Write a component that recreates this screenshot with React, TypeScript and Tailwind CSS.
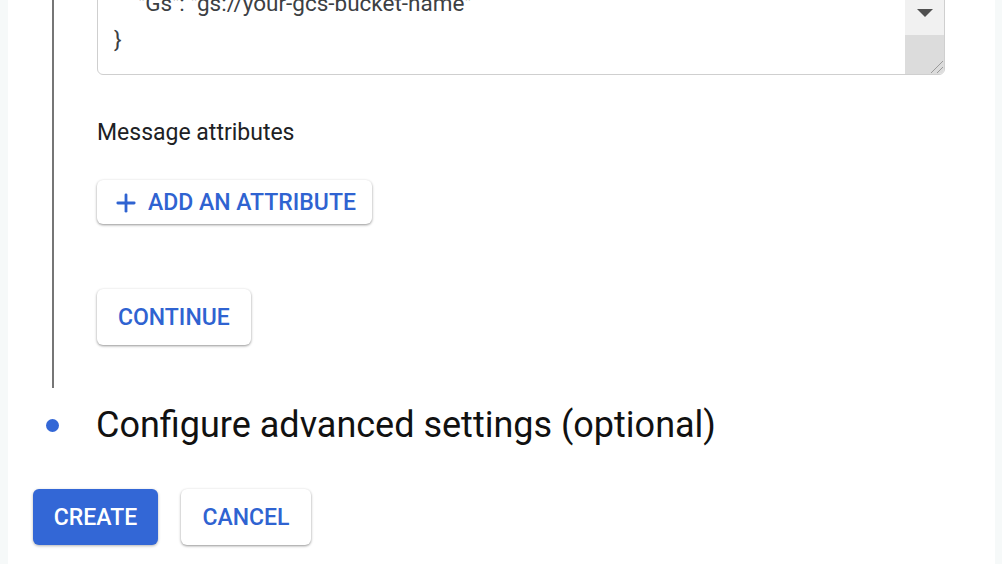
import { Plus } from 'lucide-react';

const font = { fontFamily: 'Roboto, "Liberation Sans", sans-serif' };

function RaisedButton({ children, className }: { children: React.ReactNode; className?: string }) {
  return (
    <button
      className={`flex items-center rounded-md bg-white pt-[2px] font-medium text-[#2f63d1] shadow-[0_1px_3px_rgba(0,0,0,0.3),0_1px_2px_rgba(0,0,0,0.15)] ${className ?? ''}`}
    >
      {children}
    </button>
  );
}

function CodeBox() {
  return (
    <div className="relative -mt-[26px] h-[101px] w-[848px] overflow-hidden rounded-md border border-[#cfcfcf] bg-white text-[22.5px] leading-[36px] text-[#3c4043]">
      <div className="pl-[16px] pt-[10px]">
        <div className="pl-[24px]">"Gs": "gs://your-gcs-bucket-name"</div>
        <div>{'}'}</div>
      </div>
      <div className="absolute right-0 top-0 flex h-full w-[39px] flex-col">
        <div className="flex h-[60px] items-end justify-center bg-[#f1f1f1] pb-[18px]">
          <div className="h-0 w-0 border-x-[8px] border-t-[8px] border-x-transparent border-t-[#505050]" />
        </div>
        <div className="relative flex-1 bg-[#dcdcdc]">
          <svg className="absolute bottom-0 right-0" width="16" height="16" viewBox="0 0 16 16">
            <line x1="3" y1="15" x2="15" y2="3" stroke="#9a9a9a" strokeWidth="1" />
            <line x1="9" y1="15" x2="15" y2="9" stroke="#9a9a9a" strokeWidth="1" />
          </svg>
        </div>
      </div>
    </div>
  );
}

export default function App() {
  return (
    <div className="flex h-[564px] w-full overflow-hidden bg-white text-[#202124]" style={font}>
      <div className="w-2 bg-[#f6f9f9]" />
      <div className="flex-1">
        <div className="ml-[44px] border-l-2 border-[#767676] pb-[43px] pl-[43px]">
          <CodeBox />
          <div className="mt-[45px] text-[23px] leading-[26px]">Message attributes</div>
          <RaisedButton className="mt-[34px] h-[44px] gap-[8px] pl-[15px] pr-[16px] text-[23px]">
            <Plus className="h-[28px] w-[28px]" strokeWidth={2.4} />
            ADD AN ATTRIBUTE
          </RaisedButton>
          <RaisedButton className="mt-[65px] h-[56px] px-[21px] text-[23px]">CONTINUE</RaisedButton>
        </div>
        <div className="mt-[17px] flex h-[40px] items-center">
          <div className="ml-[38px] h-[13px] w-[13px] rounded-full bg-[#3367d6]" />
          <div className="ml-[37px] text-[36px] leading-[40px] text-[#111]">
            Configure advanced settings (optional)
          </div>
        </div>
        <div className="ml-[25px] mt-[44px] flex gap-[23px]">
          <button className="h-[56px] w-[125px] rounded-md bg-[#3367d6] pt-[2px] text-[23px] font-medium text-white shadow-[0_1px_3px_rgba(0,0,0,0.3)]">
            CREATE
          </button>
          <RaisedButton className="h-[56px] w-[130px] justify-center text-[23px]">CANCEL</RaisedButton>
        </div>
      </div>
      <div className="w-[7px] bg-[#f6f9f9]" />
    </div>
  );
}
